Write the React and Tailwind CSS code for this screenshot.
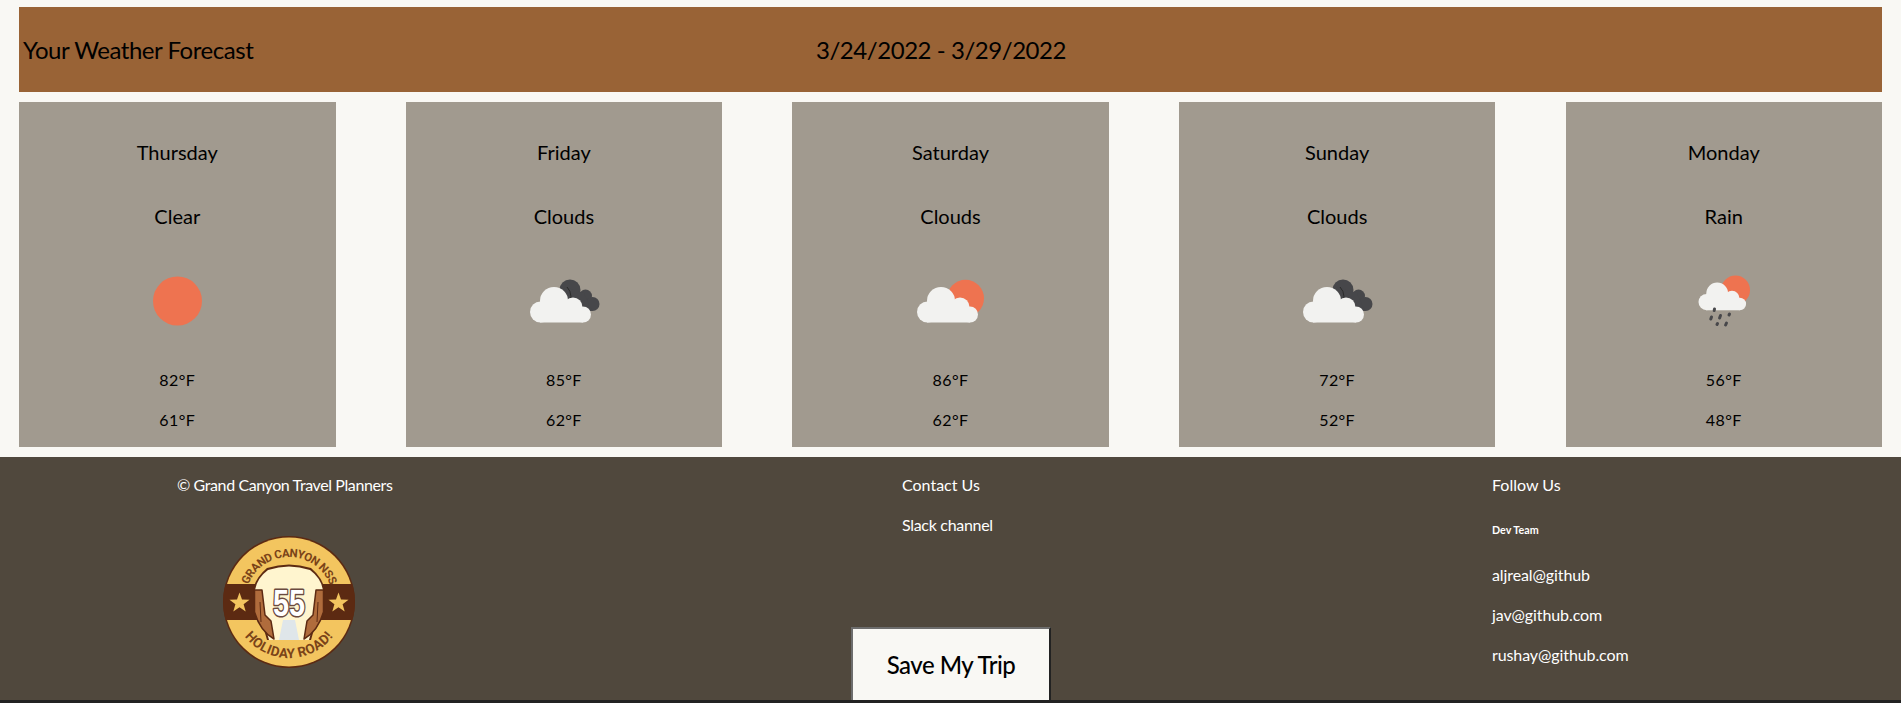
const days = [
  { day: 'Thursday', sky: 'Clear', icon: 'sun', high: '82°F', low: '61°F' },
  { day: 'Friday', sky: 'Clouds', icon: 'dark', high: '85°F', low: '62°F' },
  { day: 'Saturday', sky: 'Clouds', icon: 'partly', high: '86°F', low: '62°F' },
  { day: 'Sunday', sky: 'Clouds', icon: 'dark', high: '72°F', low: '52°F' },
  { day: 'Monday', sky: 'Rain', icon: 'rain', high: '56°F', low: '48°F' },
]

function Cloud() {
  return (
    <g fill="#f2f2f0">
      <circle cx="26.5" cy="61" r="10.5" />
      <circle cx="40" cy="50" r="14" />
      <circle cx="59" cy="56" r="9.5" />
      <circle cx="69" cy="63.5" r="8" />
      <rect x="26" y="56" width="43" height="15.5" />
    </g>
  )
}

function WeatherIcon({ type }) {
  return (
    <svg viewBox="0 0 100 100" className="w-[100px] h-[100px]">
      {type === 'sun' && <circle cx="50.5" cy="50" r="24.5" fill="#ee7350" />}
      {type === 'dark' && (
        <>
          <g fill="#47474a">
            <circle cx="56" cy="39" r="10.5" />
            <circle cx="71.5" cy="45" r="6.5" />
            <circle cx="78.5" cy="53" r="7" />
            <path d="M50 36 L70 42 L78 60 L62 60 Z" />
          </g>
          <path d="M53 36 A14 14 0 0 1 53.5 55 A9.5 9.5 0 0 1 69 56 A8 8 0 0 1 74 58" fill="none" stroke="#2b2b2b" strokeWidth="1" />
          <Cloud />
        </>
      )}
      {type === 'partly' && (
        <>
          <circle cx="64.5" cy="47.3" r="18.5" fill="#ee7350" />
          <Cloud />
        </>
      )}
      {type === 'rain' && (
        <>
          <circle cx="61.5" cy="39" r="14.5" fill="#ee7350" />
          <g transform="translate(12 3.5) scale(0.78)">
            <Cloud />
          </g>
          <g stroke="#47474a" strokeWidth="3" strokeLinecap="round">
            <path d="M40.5 58 L40.2 59.5" />
            <path d="M37.5 66 L36.8 68" />
            <path d="M46.5 64.5 L45.6 67" />
            <path d="M55.5 63 L55 64" />
            <path d="M43.5 72.5 L43 73.5" />
            <path d="M52.5 72 L51.6 74" />
          </g>
        </>
      )}
    </svg>
  )
}

function Logo() {
  return (
    <svg viewBox="0 0 140 140" className="w-[140px] h-[140px]">
      <defs>
        <path id="logoTop" d="M 29 85 A 44 44 0 1 1 111 85" />
        <path id="logoBottom" d="M 17.4 50.8 A 56 56 0 1 0 122.6 50.8" />
      </defs>
      <circle cx="70" cy="70" r="66" fill="#5c2a12" />
      <circle cx="70" cy="70" r="64.5" fill="#f3c55f" />
      <path d="M6.6 52 H133.4 A65 65 0 0 1 133.4 88 H6.6 A65 65 0 0 1 6.6 52 Z" fill="#5c2a12" />
      <text fontFamily="'Roboto', sans-serif" fontWeight="700" fontSize="11.5" fill="#7a4318" letterSpacing="-0.5">
        <textPath href="#logoTop" startOffset="50%" textAnchor="middle">GRAND CANYON NSS</textPath>
      </text>
      <text fontFamily="'Roboto', sans-serif" fontWeight="700" fontSize="13.5" fill="#7a4318" letterSpacing="0.3">
        <textPath href="#logoBottom" startOffset="50%" textAnchor="middle">HOLIDAY ROAD!</textPath>
      </text>
      <path d="M34 59 Q36 46 48 36 Q70 29 92 36 Q104 46 106 59 L92 108 L48 108 Z" fill="#5c2a12" />
      <path d="M36 58 Q38 46 49 38 Q70 31 91 38 Q102 46 104 58 L90 108 L50 108 Z" fill="#fff5cf" />
      <path d="M60 108 L64 88 L76 88 L80 108 Z" fill="#dfe6ea" />
      <path d="M35.5 58 L43 58 L46 83 L52 89 L55 107 Q41 99 35.5 80 Z" fill="#b06c3c" stroke="#5c2a12" strokeWidth="1.5" strokeLinejoin="round" />
      <path d="M104.5 58 L97 58 L94 83 L88 89 L85 107 Q99 99 104.5 80 Z" fill="#b06c3c" stroke="#5c2a12" strokeWidth="1.5" strokeLinejoin="round" />
      <path d="M41 70 L42 90 M99 70 L98 90" stroke="#5c2a12" strokeWidth="1" fill="none" />
      <text x="70" y="83.5" textAnchor="middle" textLength="32" lengthAdjust="spacingAndGlyphs" fontFamily="'Liberation Sans', sans-serif" fontWeight="700" fontSize="36" fill="#ffffff" stroke="#6a4a3f" strokeWidth="3" strokeLinejoin="round" paintOrder="stroke">55</text>
      <polygon points="20.5,60.5 23,67.5 30.5,67.7 24.6,72.3 26.7,79.5 20.5,75.3 14.3,79.5 16.4,72.3 10.5,67.7 18,67.5" fill="#f3c55f" />
      <polygon points="119.5,60.5 122,67.5 129.5,67.7 123.6,72.3 125.7,79.5 119.5,75.3 113.3,79.5 115.4,72.3 109.5,67.7 117,67.5" fill="#f3c55f" />
    </svg>
  )
}

export default function App() {
  return (
    <div className="h-[703px] overflow-hidden bg-[#f9f8f4] pt-[7px] font-['Lato',sans-serif] text-black">
      <div className="mx-[19px] h-[85px] bg-[#996336] flex items-center pl-1 text-2xl tracking-[-0.45px]">
        <h1 className="w-[793px]">Your Weather Forecast</h1>
        <h2 className="w-[250px] text-center whitespace-nowrap">3/24/2022 - 3/29/2022</h2>
      </div>

      <div className="mx-[19px] mt-[10px] flex justify-between">
        {days.map(d => (
          <div key={d.day} className="w-[316.5px] h-[345px] bg-[#a19a8f] flex flex-col items-center pt-[35px]">
            <p className="text-xl leading-[30px]">{d.day}</p>
            <p className="text-xl leading-[30px] mt-[34px]">{d.sky}</p>
            <div className="mt-[20px] mb-[17px]"><WeatherIcon type={d.icon} /></div>
            <p className="text-base tracking-[0.4px]">{d.high}</p>
            <p className="text-base tracking-[0.4px] mt-4">{d.low}</p>
          </div>
        ))}
      </div>

      <div className="mt-[10px] h-[246px] bg-[#50483d] border-b-[3px] border-[#222222] flex text-base text-white">
        <div className="w-[902px] pl-[177px] pt-4">
          <p className="tracking-[-0.4px]">© Grand Canyon Travel Planners</p>
          <div className="ml-[42px] mt-[35px]"><Logo /></div>
        </div>
        <div className="w-[590px] pt-4 flex flex-col">
          <p>Contact Us</p>
          <p className="mt-4 tracking-[-0.3px]">Slack channel</p>
          <button className="mt-auto -ml-[51px] w-[200px] h-[73px] bg-[#f9f8f4] border-2 border-b-0 border-t-[#6d6d6d] border-l-[#6d6d6d] border-r-[#222222] text-black text-2xl font-medium tracking-[-0.5px]">
            Save My Trip
          </button>
        </div>
        <div className="pt-4">
          <p>Follow Us</p>
          <h6 className="mt-[25px] text-[10.72px] font-bold leading-4">Dev Team</h6>
          <p className="mt-[25px] tracking-[-0.1px]">aljreal@github</p>
          <p className="mt-4 tracking-[-0.1px]">jav@github.com</p>
          <p className="mt-4 tracking-[-0.1px]">rushay@github.com</p>
        </div>
      </div>
    </div>
  )
}
